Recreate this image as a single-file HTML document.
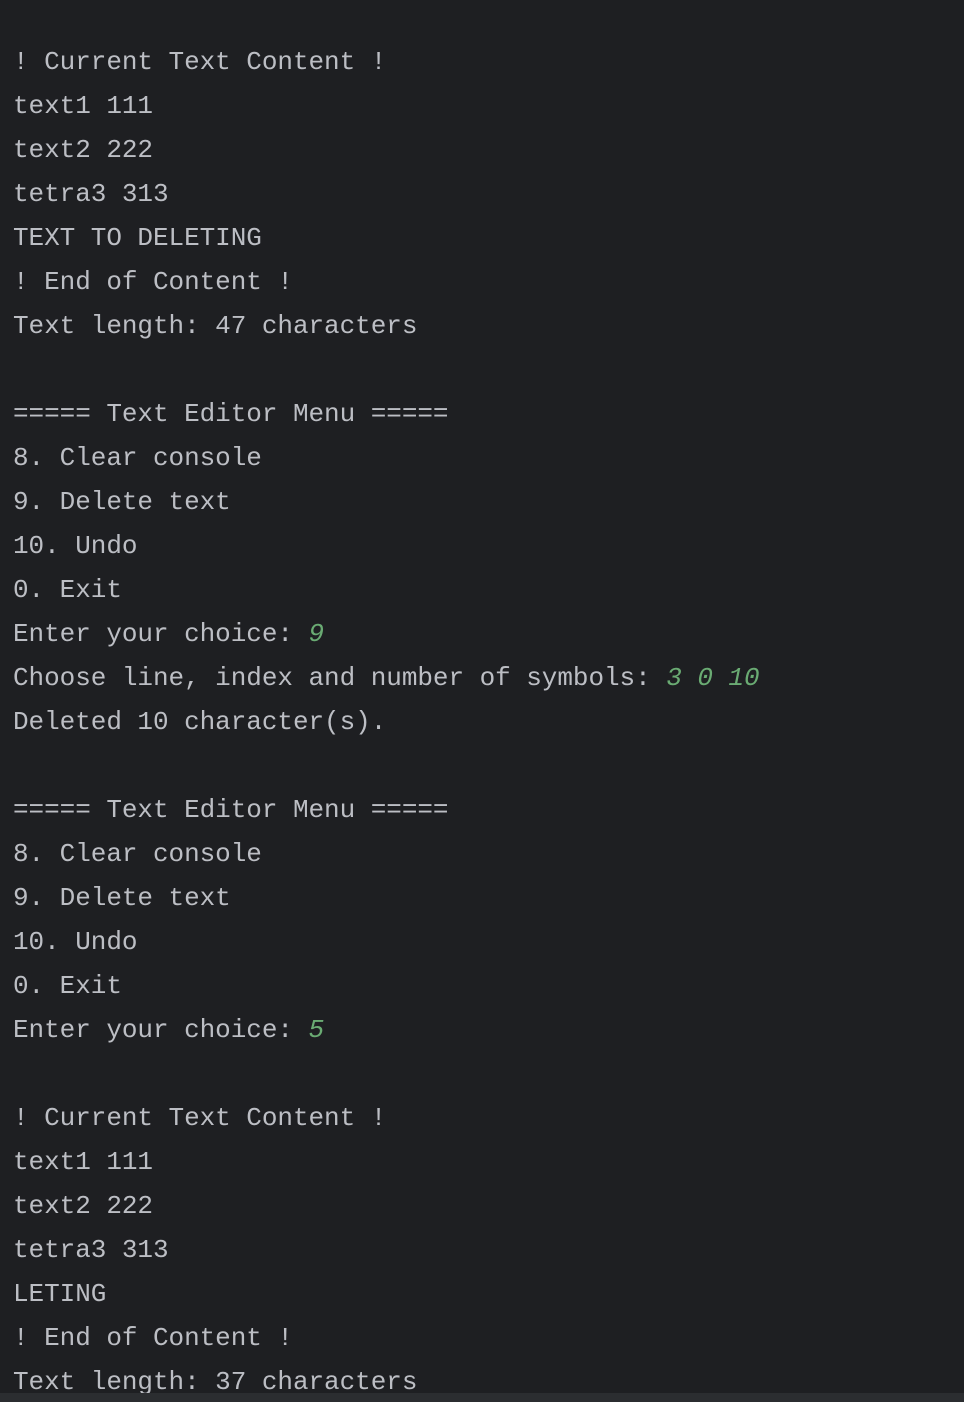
<!DOCTYPE html>
<html><head><style>
html,body{margin:0;padding:0;background:#1e1f22;width:964px;height:1402px;overflow:hidden;position:relative}
pre{margin:0;position:absolute;left:13px;top:40px;font-family:"Liberation Mono",monospace;font-size:26px;line-height:44px;color:#bcbec4;letter-spacing:-0.05px}
i{color:#6aab73}
.bar{position:absolute;left:0;top:1393px;width:964px;height:9px;background:#2b2d30}
</style></head><body>
<pre>! Current Text Content !
text1 111
text2 222
tetra3 313
TEXT TO DELETING
! End of Content !
Text length: 47 characters

===== Text Editor Menu =====
8. Clear console
9. Delete text
10. Undo
0. Exit
Enter your choice: <i>9</i>
Choose line, index and number of symbols: <i>3 0 10</i>
Deleted 10 character(s).

===== Text Editor Menu =====
8. Clear console
9. Delete text
10. Undo
0. Exit
Enter your choice: <i>5</i>

! Current Text Content !
text1 111
text2 222
tetra3 313
LETING
! End of Content !
Text length: 37 characters</pre>
<div class="bar"></div>
</body></html>
